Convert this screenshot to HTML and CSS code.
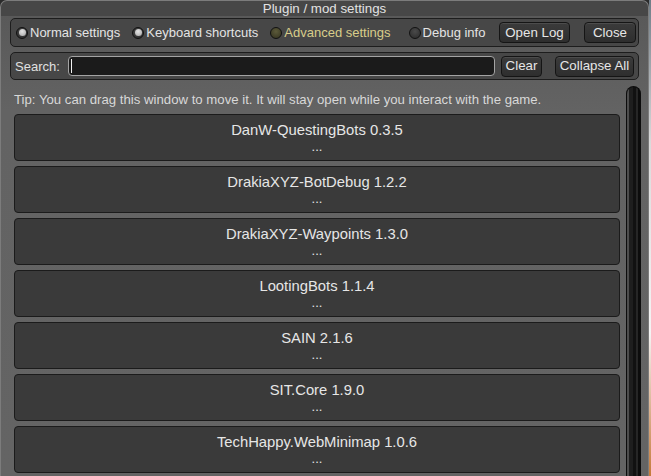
FILE: index.html
```html
<!DOCTYPE html>
<html>
<head>
<meta charset="utf-8">
<title>Plugin / mod settings</title>
<link rel="stylesheet" href="styles.css">
</head>
<body>
<div class="screen">
  <div class="window">
    <div class="titlebar">Plugin / mod settings</div>
    <div class="toolbar top-row">
      <span class="toggle on"><span class="radio"></span>Normal settings</span>
      <span class="toggle on"><span class="radio"></span>Keyboard shortcuts</span>
      <span class="toggle advanced"><span class="radio"></span>Advanced settings</span>
      <span class="toggle debug"><span class="radio"></span>Debug info</span>
      <button class="btn open-log">Open Log</button>
      <button class="btn close">Close</button>
    </div>
    <div class="toolbar search-row">
      <span class="search-label">Search:</span>
      <div class="search-field"><span class="caret"></span></div>
      <button class="btn clear">Clear</button>
      <button class="btn collapse">Collapse All</button>
    </div>
    <div class="content">
      <div class="list">
        <p class="tip">Tip: You can drag this window to move it. It will stay open while you interact with the game.</p>
        <div class="plugin"><div class="name">DanW-QuestingBots 0.3.5</div><div class="more">...</div></div>
        <div class="plugin"><div class="name">DrakiaXYZ-BotDebug 1.2.2</div><div class="more">...</div></div>
        <div class="plugin"><div class="name">DrakiaXYZ-Waypoints 1.3.0</div><div class="more">...</div></div>
        <div class="plugin"><div class="name">LootingBots 1.1.4</div><div class="more">...</div></div>
        <div class="plugin"><div class="name">SAIN 2.1.6</div><div class="more">...</div></div>
        <div class="plugin"><div class="name">SIT.Core 1.9.0</div><div class="more">...</div></div>
        <div class="plugin"><div class="name">TechHappy.WebMinimap 1.0.6</div><div class="more">...</div></div>
      </div>
      <div class="scrollbar"></div>
    </div>
  </div>
  <div class="game-edge"></div>
</div>
</body>
</html>
```

FILE: styles.css
```css
* { box-sizing: border-box; }

html, body {
  margin: 0;
  padding: 0;
  background: #2b2b2b;
}

body {
  font-family: "Liberation Sans", Arial, sans-serif;
  font-size: 13px;
  color: #e4e4e4;
}

.screen {
  display: flex;
  width: 651px;
  height: 476px;
  overflow: hidden;
}

.window {
  width: 649px;
  height: 476px;
  flex: none;
  display: flex;
  flex-direction: column;
  border: 1px solid #7c7c7c;
  border-bottom: none;
  border-radius: 7px 7px 0 0;
  background: linear-gradient(#474747 0, #474747 15px, #595959 15px, #5e5e5e 60px, #636363 110px, #646464 100%);
  overflow: hidden;
}

.titlebar {
  height: 15px;
  line-height: 15px;
  text-align: center;
  color: #e2e2e2;
  font-size: 13.3px;
}

.toolbar {
  display: flex;
  align-items: center;
  margin: 0 9px;
  background: #474747;
  border: 1px solid #1d1d1d;
  border-radius: 5px;
}

.top-row {
  margin-top: 2px;
  height: 29px;
  padding: 0 2px 0 5px;
}

.search-row {
  margin-top: 5px;
  height: 28px;
  padding: 0 4px 0 4px;
}

.toggle {
  display: inline-flex;
  align-items: center;
  gap: 2px;
  margin-right: 12px;
  white-space: nowrap;
  color: #e4e4e4;
}

.toggle.debug { margin-left: 6px; margin-right: 0; }

.radio {
  width: 12px;
  height: 12px;
  border-radius: 50%;
  border: 1.5px solid #121212;
  background: radial-gradient(circle at 50% 35%, #4a4a4a, #2a2a2a);
  display: inline-flex;
  align-items: center;
  justify-content: center;
}

.toggle.on .radio::after {
  content: "";
  width: 7px;
  height: 7px;
  border-radius: 50%;
  background: radial-gradient(circle at 45% 35%, #e4e4e4, #a4a4a4);
}

.toggle.advanced { color: #d8cd8a; }
.toggle.advanced .radio {
  background: radial-gradient(circle at 50% 35%, #5c5a3a, #33321f);
}

.btn {
  font-family: inherit;
  font-size: 13.3px;
  color: #e6e6e6;
  height: 21px;
  padding: 0;
  border: 1px solid #151515;
  border-radius: 4px;
  background: linear-gradient(#3b3b3b, #2e2e2e);
  box-shadow: inset 0 1px 0 #4c4c4c;
  text-align: center;
  line-height: 18px;
  flex: none;
}

.open-log { width: 71px; margin-left: auto; }
.close { width: 52px; margin-left: 14px; }
.clear { width: 41px; margin-left: 6px; }
.collapse { width: 79px; margin-left: 13px; }

.search-label {
  color: #e0e0e0;
  width: 53px;
  flex: none;
}

.search-field {
  flex: 1;
  height: 20px;
  background: #1b1b1b;
  border: 1px solid #a4a4a4;
  border-radius: 4px;
  display: flex;
  align-items: center;
  padding-left: 2px;
}

.caret {
  width: 1px;
  height: 14px;
  background: #f2f2f2;
}

.content {
  flex: 1;
  display: flex;
  padding: 6px 7px 0 13px;
  min-height: 0;
}

.list {
  flex: 1;
  min-width: 0;
}

.tip {
  margin: 0;
  padding: 6px 0 6px 0;
  line-height: 16px;
  font-size: 13.2px;
  color: #d8d8d8;
  white-space: nowrap;
}

.plugin {
  height: 47px;
  margin-bottom: 5px;
  background: #3a3a3a;
  border: 1px solid #1b1b1b;
  border-radius: 4px;
  padding-top: 7px;
  text-align: center;
  line-height: 16px;
  color: #e6e6e6;
  font-size: 14.8px;
}

.plugin .more {
  font-size: 13px;
  line-height: 17px;
}

.scrollbar {
  width: 15px;
  margin-left: 6px;
  flex: none;
  border: 1px solid #0c0c0c;
  border-bottom: none;
  border-radius: 8px 8px 0 0;
  background: linear-gradient(to right, #4e4e4e 0, #4e4e4e 2px, #1e1e1e 2px, #1e1e1e 6px, #111111 6px, #111111 9px, #262626 9px, #262626 11px, #0c0c0c 11px);
}

.game-edge {
  width: 2px;
  height: 476px;
  flex: none;
  background: linear-gradient(#6f7c86, #dadada 30%, #f4f4f4 70%, #c47a3a);
}
```
